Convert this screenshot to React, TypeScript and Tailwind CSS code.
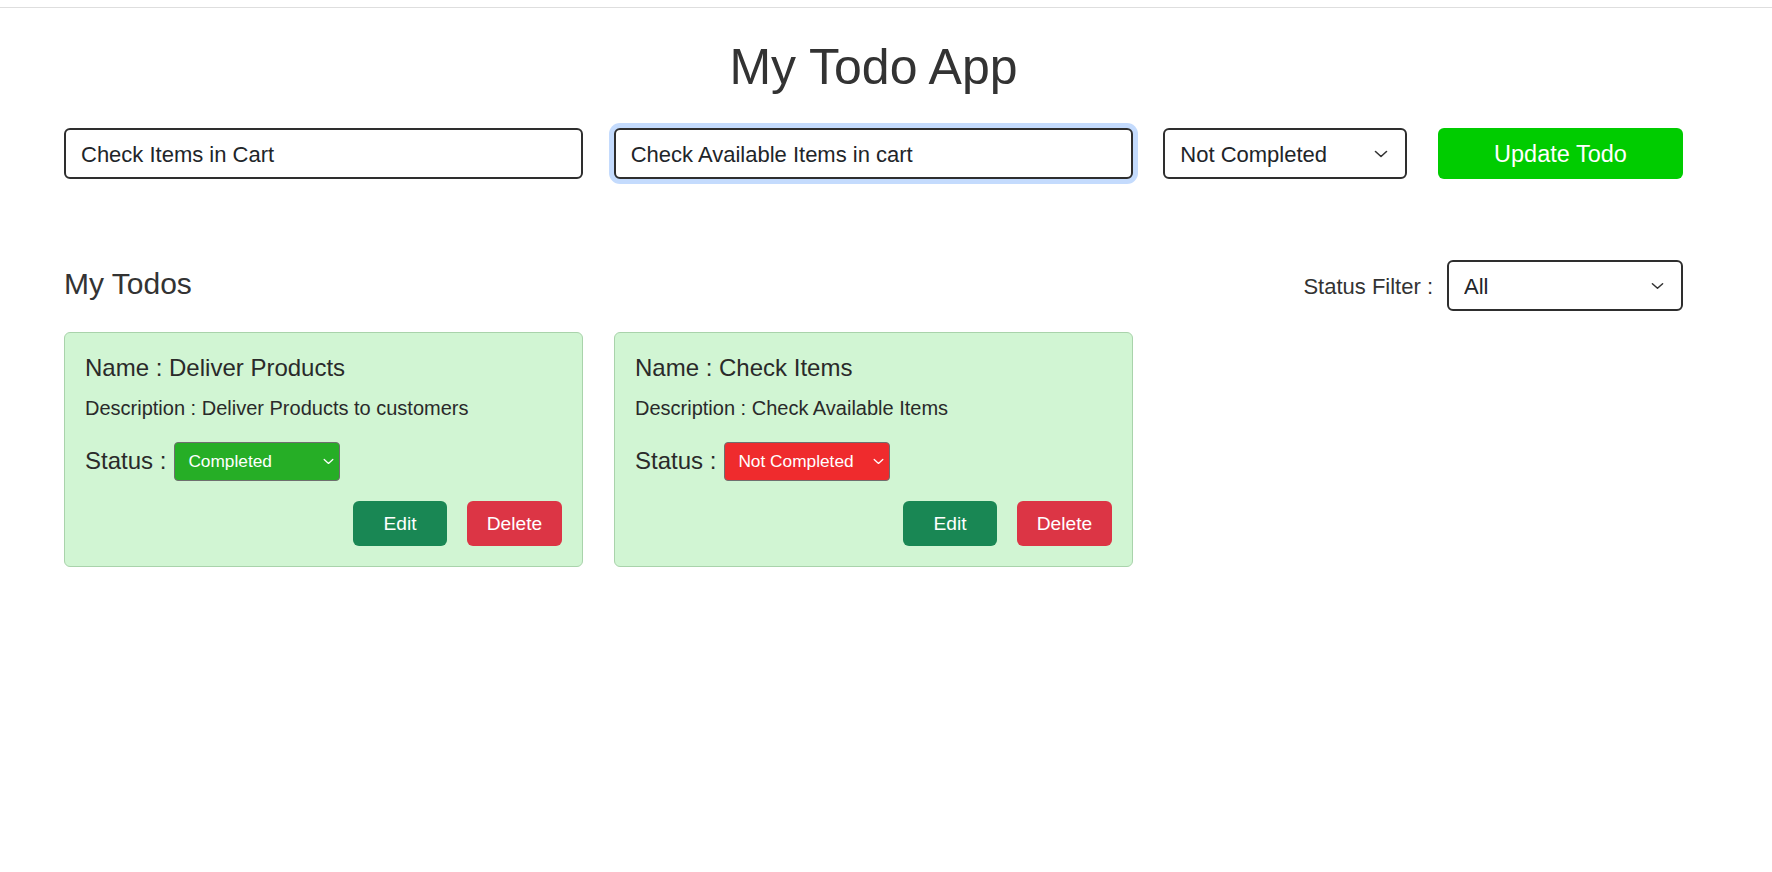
import { useState } from 'react'

type Todo = { id: number; name: string; description: string; status: 'Completed' | 'Not Completed' }

const field = "h-[51px] w-full border-2 border-[#2e2e2e] rounded-[6px] bg-white pl-[15px] pt-[2px] text-[22px] text-[#212529] outline-none"

function Chevron({ className }: { className: string }) {
  return (
    <svg viewBox="0 0 14 8" fill="none" className={className}>
      <path d="M1.5 1.5 7 6.5 12.5 1.5" stroke="currentColor" strokeWidth="1.6" strokeLinecap="round" strokeLinejoin="round" />
    </svg>
  )
}

export default function App() {
  const [title, setTitle] = useState('Check Items in Cart')
  const [desc, setDesc] = useState('Check Available Items in cart')
  const [status, setStatus] = useState('Not Completed')
  const [filter, setFilter] = useState('All')
  const [todos, setTodos] = useState<Todo[]>([
    { id: 1, name: 'Deliver Products', description: 'Deliver Products to customers', status: 'Completed' },
    { id: 2, name: 'Check Items', description: 'Check Available Items', status: 'Not Completed' },
  ])

  const shown = todos.filter(t => filter === 'All' || t.status === filter)

  return (
    <div className="min-h-screen bg-white font-['Liberation_Sans',Arial,sans-serif] text-[#212529]">
      <div className="h-[8px] border-b border-[#dedede]" />
      <div className="w-[1748px] pl-[64px] pr-[65px]">
        <h1 className="mt-[29px] text-center text-[50px] leading-[1.2] text-[#333]">My Todo App</h1>

        {/* form row */}
        <div className="mt-[31px] grid grid-cols-[519px_519px_244px_245px] justify-between">
          <input value={title} onChange={e => setTitle(e.target.value)} className={field} />
          <input value={desc} onChange={e => setDesc(e.target.value)}
            className={`${field} ring-[5px] ring-[#c4dbfd]`} />
          <div className="relative">
            <select value={status} onChange={e => setStatus(e.target.value)} className={`${field} appearance-none`}>
              <option>Completed</option>
              <option>Not Completed</option>
            </select>
            <Chevron className="pointer-events-none absolute right-[19px] top-[22px] w-[14px] h-[8px] text-[#333]" />
          </div>
          <button className="h-[51px] rounded-[6px] bg-[#00cc00] pt-[2px] text-[23.5px] text-white">Update Todo</button>
        </div>

        {/* list header */}
        <div className="mt-[81px] flex items-center justify-between">
          <h2 className="mb-[4px] text-[30px] leading-[1.2] text-[#333]">My Todos</h2>
          <div className="flex items-center gap-[14px]">
            <span className="pt-[2px] text-[22px] text-[#333]">Status Filter :</span>
            <div className="relative w-[236px]">
              <select value={filter} onChange={e => setFilter(e.target.value)} className={`${field} pl-[11px] appearance-none`}>
                <option>All</option>
                <option>Completed</option>
                <option>Not Completed</option>
              </select>
              <Chevron className="pointer-events-none absolute right-[19px] top-[22px] w-[13px] h-[8px] text-[#333]" />
            </div>
          </div>
        </div>

        {/* cards */}
        <div className="mt-[21px] flex gap-[31px]">
          {shown.map(t => (
            <div key={t.id} className="w-[519px] rounded-[6px] border border-[#a9d3ab] bg-[#d1f5d3] px-[20px] pt-[21px] pb-[20px]">
              <h5 className="mb-[10px] text-[24px] leading-[1.2] text-[#2a2a2a]">Name : {t.name}</h5>
              <p className="text-[20px] leading-[1.5] text-[#2a2a2a]">Description : {t.description}</p>
              <div className="mt-[19px] flex items-center gap-[8px]">
                <span className="text-[24px] leading-[1.2] text-[#2a2a2a]">Status :</span>
                <div className="relative w-[166px]">
                  <select value={t.status}
                    onChange={e => setTodos(todos.map(x => x.id === t.id ? { ...x, status: e.target.value as Todo['status'] } : x))}
                    className={`h-[39px] w-full appearance-none rounded-[4px] border border-[#6f6f6f] pl-[13px] pt-[2px] text-[17.3px] text-white outline-none ${t.status === 'Completed' ? 'bg-[#26ae26]' : 'bg-[#ef2b2d]'}`}>
                    <option>Completed</option>
                    <option>Not Completed</option>
                  </select>
                  <Chevron className="pointer-events-none absolute right-[6px] top-[16px] w-[11px] h-[7px] text-white" />
                </div>
              </div>
              <div className="mt-[20px] flex justify-end gap-[20px]">
                <button className="h-[45px] w-[94px] rounded-[6px] bg-[#198754] pt-[2px] text-[19.2px] text-white">Edit</button>
                <button onClick={() => setTodos(todos.filter(x => x.id !== t.id))}
                  className="h-[45px] w-[95px] rounded-[6px] bg-[#dc3545] pt-[2px] text-[19.2px] text-white">Delete</button>
              </div>
            </div>
          ))}
        </div>
      </div>
    </div>
  )
}
